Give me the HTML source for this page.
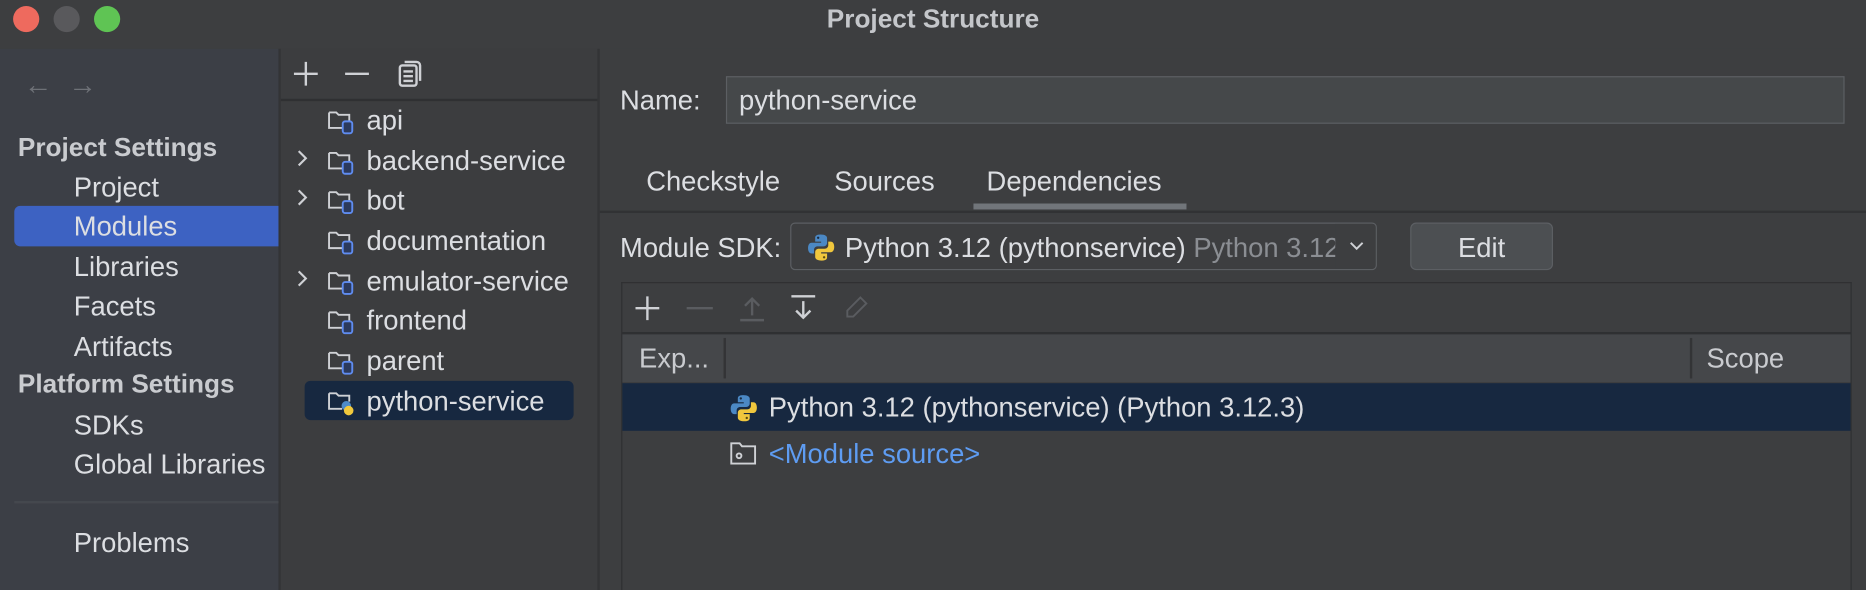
<!DOCTYPE html>
<html><head><meta charset="utf-8"><style>
*{margin:0;padding:0;box-sizing:border-box}
html,body{width:1866px;height:590px;overflow:hidden;background:#3d3e40}
#w{position:absolute;left:0;top:0;width:1568px;height:496px;transform:scale(1.19005);transform-origin:0 0;font-family:"Liberation Sans",sans-serif;font-size:23px;color:#dcdee2;background:#3d3e40}
.a{position:absolute;white-space:nowrap}
.t{position:absolute;white-space:nowrap;line-height:24px}
</style></head><body><div id="w">
<div class="a" style="left:0;top:0;width:1568px;height:41px;background:#3d3e40"></div>
<div class="a" style="left:11px;top:5px;width:22px;height:22px;border-radius:50%;background:#ee6a5e"></div>
<div class="a" style="left:45px;top:5px;width:22px;height:22px;border-radius:50%;background:#59595c"></div>
<div class="a" style="left:79px;top:5px;width:22px;height:22px;border-radius:50%;background:#5fc454"></div>
<div class="t" style="left:0;width:1568px;text-align:center;top:4px;font-weight:bold;color:#c4c6ca;font-size:22px">Project Structure</div>
<div class="a" style="left:0;top:41px;width:234px;height:455px;background:#3c3f46"></div>
<div class="a" style="left:234px;top:41px;width:2px;height:455px;background:#333436"></div>
<div class="t" style="left:20px;top:60px;color:#6e7177;font-size:24px">&#8592;&nbsp;&nbsp;&#8594;</div>
<div class="t" style="left:15px;top:112px;font-weight:bold;color:#c9cbcf;font-size:22px">Project Settings</div>
<div class="t" style="left:62px;top:145px">Project</div>
<div class="a" style="left:12px;top:173px;width:222px;height:34px;background:#3d62c2;border-radius:5px 0 0 5px"></div>
<div class="t" style="left:62px;top:178px">Modules</div>
<div class="t" style="left:62px;top:212px">Libraries</div>
<div class="t" style="left:62px;top:245px">Facets</div>
<div class="t" style="left:62px;top:279px">Artifacts</div>
<div class="t" style="left:15px;top:311px;font-weight:bold;color:#c9cbcf;font-size:22px">Platform Settings</div>
<div class="t" style="left:62px;top:345px">SDKs</div>
<div class="t" style="left:62px;top:378px">Global Libraries</div>
<div class="a" style="left:12px;top:421px;width:222px;height:2px;background:#45484e"></div>
<div class="t" style="left:62px;top:444px">Problems</div>
<div class="a" style="left:236px;top:41px;width:266px;height:455px;background:#3c3d3f"></div>
<div class="a" style="left:502px;top:41px;width:2px;height:455px;background:#333436"></div>
<div class="a" style="left:236px;top:83px;width:266px;height:2px;background:#2f3032"></div>
<svg class="a" style="left:244px;top:50px" width="120" height="24" viewBox="0 0 120 24" fill="none" stroke="#cfd1d5" stroke-width="2">
<path d="M13 2v20M3 12h20"/><path d="M46 12h20"/>
<rect x="92" y="5" width="14" height="17" rx="2"/><path d="M96 2h10a3 3 0 0 1 3 3v13"/><path d="M95 10h8M95 14h8M95 18h8"/></svg>
<svg width="0" height="0" style="position:absolute"><defs>
<g id="fo"><path d="M1.5 4.5v13h11M1.5 4.5h6l2 2h9v5" fill="none" stroke="#cfd1d5" stroke-width="1.6"/></g>
</defs></svg>
<div class="a" style="left:256px;top:320px;width:226px;height:33px;background:#172840;border-radius:5px"></div>
<svg class="a" style="left:275px;top:90px" width="30" height="260" viewBox="0 0 30 260">
<g><use href="#fo"/><rect x="13" y="12" width="8" height="10" rx="2" fill="#2c3a5c" stroke="#5f8cf0" stroke-width="1.6"/></g>
<g transform="translate(0,34)"><use href="#fo"/><rect x="13" y="12" width="8" height="10" rx="2" fill="#2c3a5c" stroke="#5f8cf0" stroke-width="1.6"/></g>
<g transform="translate(0,67)"><use href="#fo"/><rect x="13" y="12" width="8" height="10" rx="2" fill="#2c3a5c" stroke="#5f8cf0" stroke-width="1.6"/></g>
<g transform="translate(0,101)"><use href="#fo"/><rect x="13" y="12" width="8" height="10" rx="2" fill="#2c3a5c" stroke="#5f8cf0" stroke-width="1.6"/></g>
<g transform="translate(0,135)"><use href="#fo"/><rect x="13" y="12" width="8" height="10" rx="2" fill="#2c3a5c" stroke="#5f8cf0" stroke-width="1.6"/></g>
<g transform="translate(0,168)"><use href="#fo"/><rect x="13" y="12" width="8" height="10" rx="2" fill="#2c3a5c" stroke="#5f8cf0" stroke-width="1.6"/></g>
<g transform="translate(0,202)"><use href="#fo"/><rect x="13" y="12" width="8" height="10" rx="2" fill="#2c3a5c" stroke="#5f8cf0" stroke-width="1.6"/></g>
<g transform="translate(0,236)"><use href="#fo"/><circle cx="16" cy="15" r="4" fill="#4d8bc9"/><circle cx="18" cy="19" r="4" fill="#f0c83c"/></g>
</svg>
<svg class="a" style="left:248px;top:125px" width="14" height="120" viewBox="0 0 14 120" fill="none" stroke="#cfd1d5" stroke-width="1.8">
<path d="M3 2l6 6-6 6"/><path d="M3 35l6 6-6 6"/><path d="M3 103l6 6-6 6"/></svg>
<div class="t" style="left:308px;top:89px">api</div>
<div class="t" style="left:308px;top:123px">backend-service</div>
<div class="t" style="left:308px;top:156px">bot</div>
<div class="t" style="left:308px;top:190px">documentation</div>
<div class="t" style="left:308px;top:224px">emulator-service</div>
<div class="t" style="left:308px;top:257px">frontend</div>
<div class="t" style="left:308px;top:291px">parent</div>
<div class="t" style="left:308px;top:325px">python-service</div>
<div class="t" style="left:521px;top:72px">Name:</div>
<div class="a" style="left:610px;top:64px;width:940px;height:40px;background:#45484a;border:1.5px solid #5c5f63"></div>
<div class="t" style="left:621px;top:72px">python-service</div>
<div class="t" style="left:543px;top:140px">Checkstyle</div>
<div class="t" style="left:701px;top:140px">Sources</div>
<div class="t" style="left:829px;top:140px">Dependencies</div>
<div class="a" style="left:504px;top:177px;width:1064px;height:2px;background:#313234"></div>
<div class="a" style="left:818px;top:171px;width:179px;height:5px;background:#71757a"></div>
<div class="t" style="left:521px;top:196px">Module SDK:</div>
<div class="a" style="left:664px;top:187px;width:493px;height:40px;border:1.5px solid #5c5f63;border-radius:4px;overflow:hidden">
<svg class="a" style="left:13px;top:8px" width="24" height="24" viewBox="0 0 24 24"><path d="M11.5 1C7 1 7 3 7 4v3h5v1H4C2 8 1 10 1 12.5S2 17 4 17h2v-3c0-2 1.5-3 3-3h5c1.5 0 3-1 3-3V4c0-1.5-1.5-3-5.5-3z" fill="#4b88c4"/><path d="M12.5 23c4.5 0 4.5-2 4.5-3v-3h-5v-1h8c2 0 3-2 3-4.5S22 7 20 7h-2v3c0 2-1.5 3-3 3h-5c-1.5 0-3 1-3 3v4c0 1.5 1.5 3 5.5 3z" fill="#f0c73d"/><circle cx="9.5" cy="3.8" r="1" fill="#1b2b40"/><circle cx="14.5" cy="20.2" r="1" fill="#5a4a10"/></svg>
<div class="t" style="left:45px;top:8px">Python 3.12 (pythonservice) <span style="color:#8b8e93">Python 3.12</span></div>
<div class="a" style="right:0;top:0;width:34px;height:38px;background:#3d3e40"></div>
<svg class="a" style="right:10px;top:15px" width="12" height="8" viewBox="0 0 12 8" fill="none" stroke="#cfd1d5" stroke-width="1.6"><path d="M1 1l5 5 5-5"/></svg>
</div>
<div class="a" style="left:1185px;top:187px;width:120px;height:40px;background:#4c4f52;border:1.5px solid #5c5f63;border-radius:5px"></div>
<div class="t" style="left:1185px;width:120px;text-align:center;top:196px">Edit</div>
<div class="a" style="left:522px;top:237px;width:1034px;height:259px;border:1.5px solid #2f3032;border-bottom:none;background:#3d3e40"></div>
<svg class="a" style="left:532px;top:247px" width="200" height="24" viewBox="0 0 200 24" fill="none" stroke-width="2">
<path d="M12 2v20M2 12h20" stroke="#cfd1d5"/><path d="M45 12h22" stroke="#5a5c60"/>
<path d="M100 4v14M94 10l6-6 6 6M90 22h20" stroke="#5a5c60"/>
<path d="M143 6v14M137 14l6 6 6-6M133 2h20" stroke="#cfd1d5"/>
<path d="M191 3l5 5-11 11h-5v-5z" stroke="#5a5c60" stroke-width="1.6"/></svg>
<div class="a" style="left:523px;top:279px;width:1032px;height:2px;background:#2f3032"></div>
<div class="a" style="left:523px;top:281px;width:1032px;height:40px;background:#45474a"></div>
<div class="a" style="left:608px;top:284px;width:2px;height:34px;background:#333436"></div>
<div class="a" style="left:1420px;top:284px;width:2px;height:34px;background:#333436"></div>
<div class="t" style="left:537px;top:289px;color:#c9cbcf">Exp...</div>
<div class="t" style="left:1434px;top:289px;color:#c9cbcf">Scope</div>
<div class="a" style="left:523px;top:322px;width:1032px;height:40px;background:#172840"></div>
<svg class="a" style="left:613px;top:331px" width="24" height="24" viewBox="0 0 24 24"><path d="M11.5 1C7 1 7 3 7 4v3h5v1H4C2 8 1 10 1 12.5S2 17 4 17h2v-3c0-2 1.5-3 3-3h5c1.5 0 3-1 3-3V4c0-1.5-1.5-3-5.5-3z" fill="#4b88c4"/><path d="M12.5 23c4.5 0 4.5-2 4.5-3v-3h-5v-1h8c2 0 3-2 3-4.5S22 7 20 7h-2v3c0 2-1.5 3-3 3h-5c-1.5 0-3 1-3 3v4c0 1.5 1.5 3 5.5 3z" fill="#f0c73d"/><circle cx="9.5" cy="3.8" r="1" fill="#1b2b40"/><circle cx="14.5" cy="20.2" r="1" fill="#5a4a10"/></svg>
<div class="t" style="left:646px;top:330px">Python 3.12 (pythonservice) (Python 3.12.3)</div>
<svg class="a" style="left:613px;top:370px" width="24" height="22" viewBox="0 0 24 22" fill="none" stroke="#cfd1d5" stroke-width="1.6"><path d="M1.5 2.5h7l2 2.5h11v14.5h-20z"/><circle cx="8" cy="13" r="2"/></svg>
<div class="t" style="left:646px;top:369px;color:#5e9cf2">&lt;Module source&gt;</div>
</div></body></html>
